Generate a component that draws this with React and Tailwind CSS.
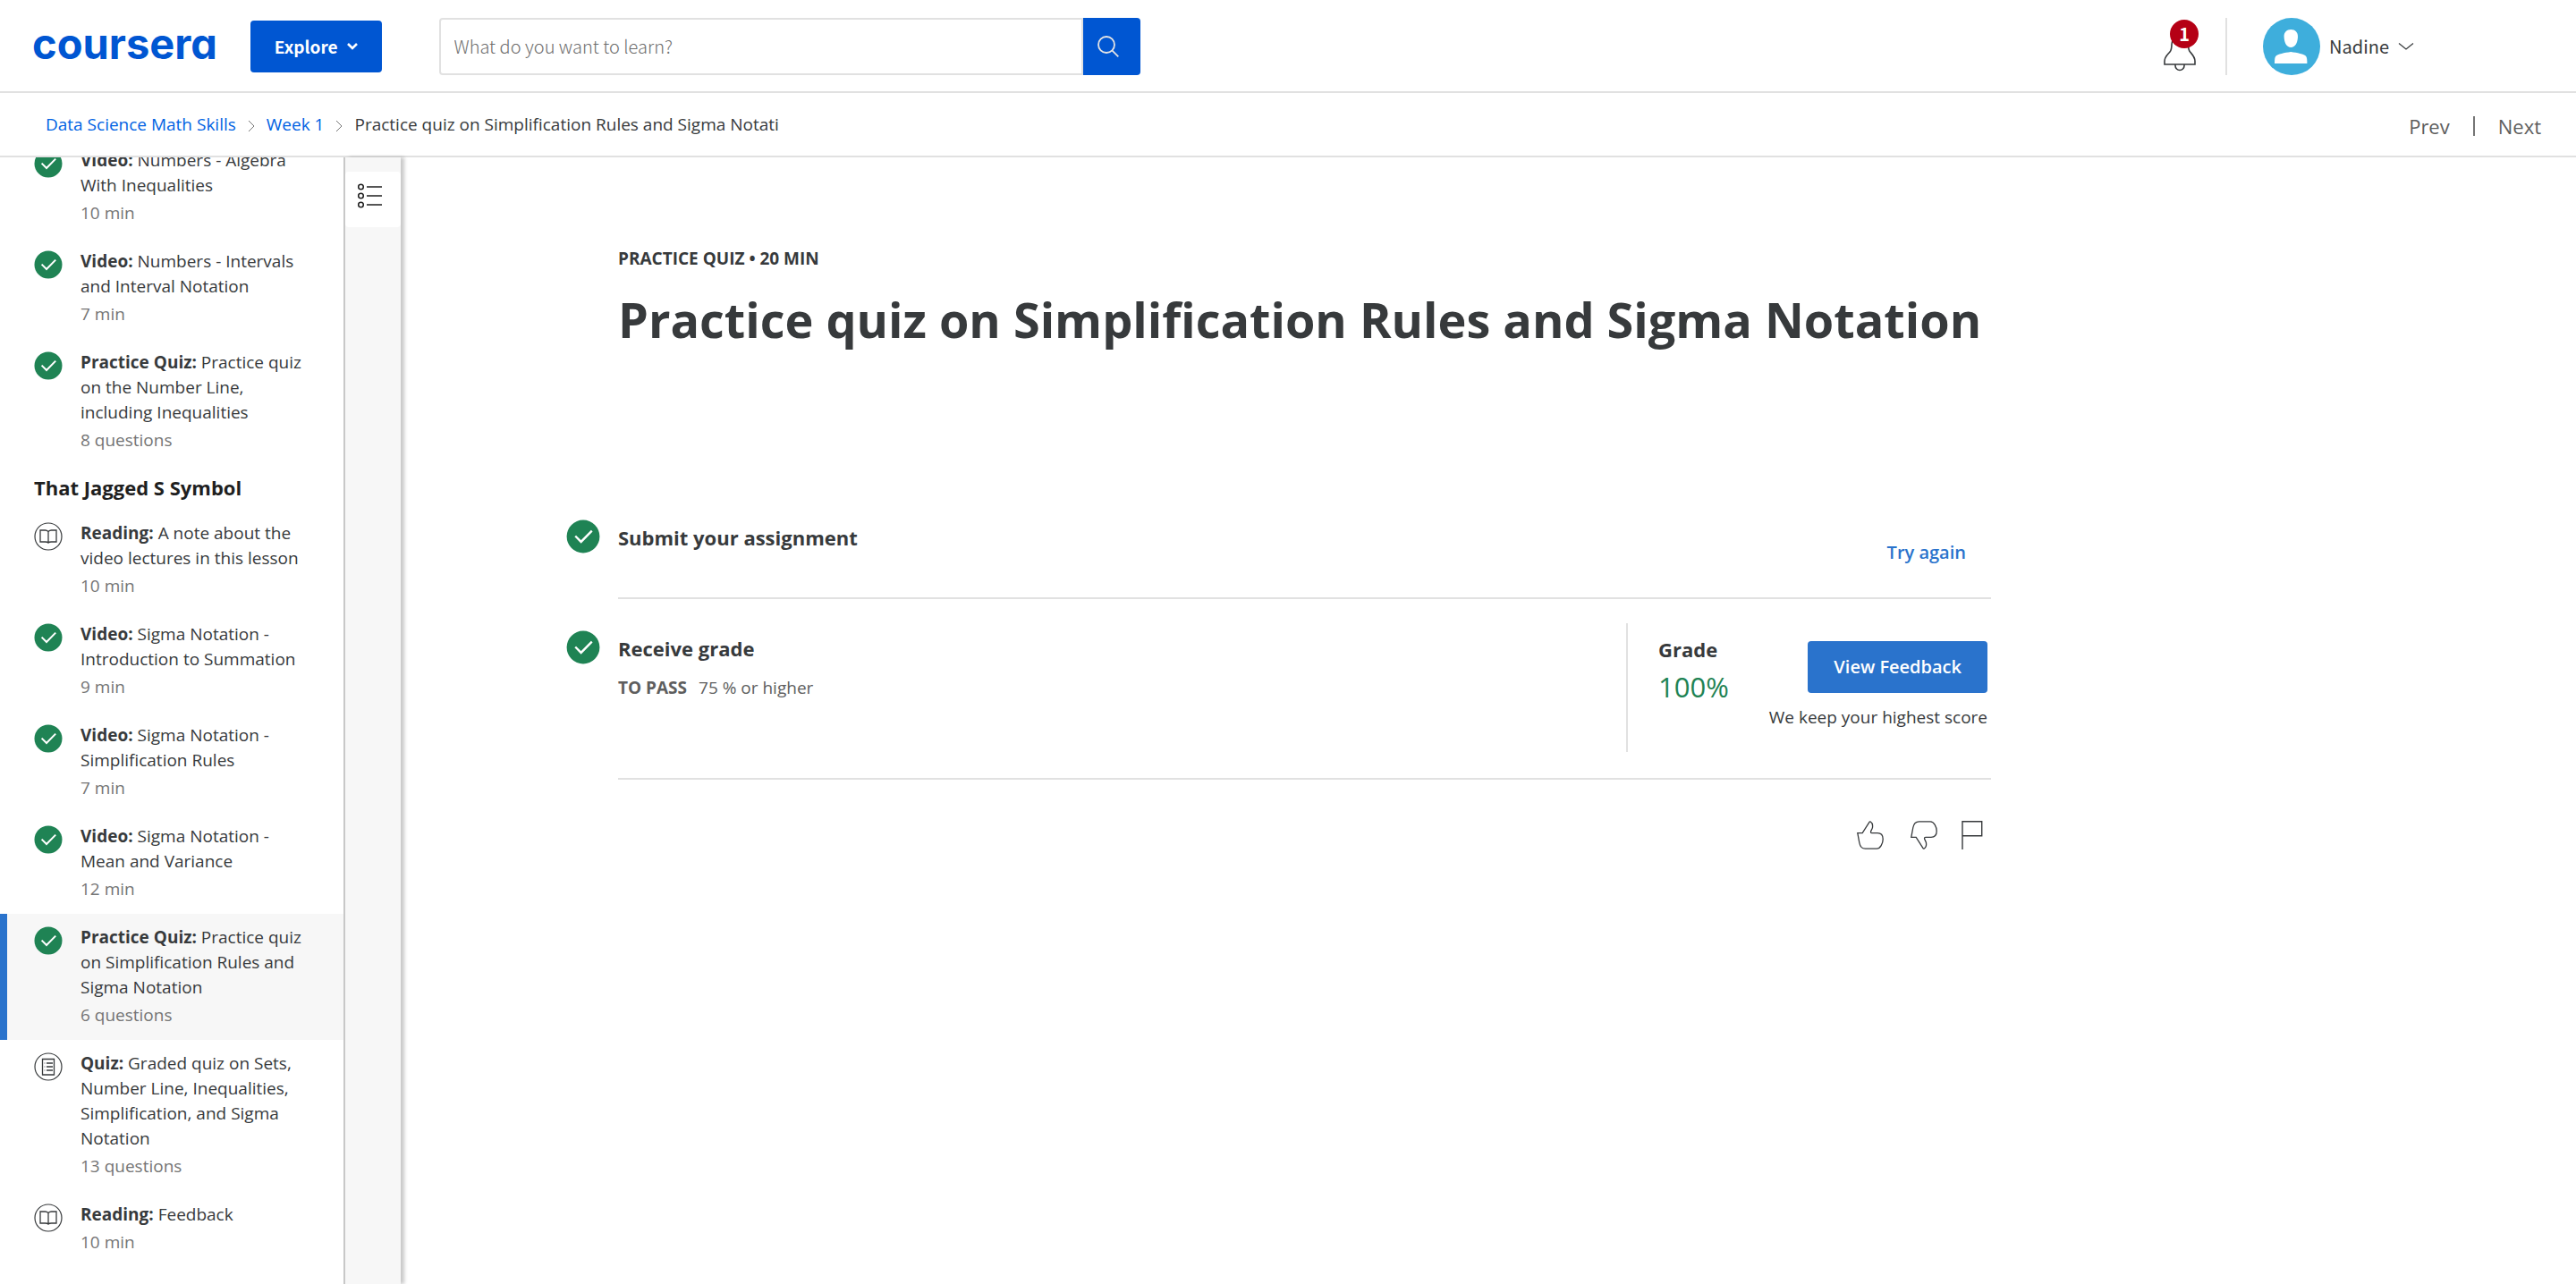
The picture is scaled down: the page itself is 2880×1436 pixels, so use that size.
import React from "react";

const items = [
  { kind: "done", type: "Video", title: "Numbers - Algebra With Inequalities", meta: "10 min" },
  { kind: "done", type: "Video", title: "Numbers - Intervals and Interval Notation", meta: "7 min" },
  { kind: "done", type: "Practice Quiz", title: "Practice quiz on the Number Line, including Inequalities", meta: "8 questions" },
];

const jaggedItems = [
  { kind: "reading", type: "Reading", title: "A note about the video lectures in this lesson", meta: "10 min" },
  { kind: "done", type: "Video", title: "Sigma Notation - Introduction to Summation", meta: "9 min" },
  { kind: "done", type: "Video", title: "Sigma Notation - Simplification Rules", meta: "7 min" },
  { kind: "done", type: "Video", title: "Sigma Notation - Mean and Variance", meta: "12 min" },
  { kind: "done", type: "Practice Quiz", title: "Practice quiz on Simplification Rules and Sigma Notation", meta: "6 questions", active: true },
  { kind: "quiz", type: "Quiz", title: "Graded quiz on Sets, Number Line, Inequalities, Simplification, and Sigma Notation", meta: "13 questions" },
  { kind: "reading", type: "Reading", title: "Feedback", meta: "10 min" },
];

function DoneIcon({ className }) {
  return (
    <svg viewBox="0 0 32 32" className={className} fill="none" aria-hidden="true">
      <circle cx="16" cy="16" r="15.5" fill="#1f8354" />
      <path d="M8.6 15.6 14 21 24.2 10.6" stroke="#fff" strokeWidth="2" />
    </svg>
  );
}

function ReadingIcon({ className }) {
  return (
    <svg viewBox="0 0 32 32" className={className} fill="none" stroke="#373a3c" aria-hidden="true">
      <circle cx="16" cy="16" r="15" strokeWidth="1.2" />
      <path d="M16 10.500c-1-1-2.200-1.500-3.500-1.500H7v13h5.500c1.300 0 2.800.2 3.500 1 .7-.8 2.200-1 3.500-1H25V9h-5.500c-1.300 0-2.500.5-3.500 1.500Zm0 0v13" strokeWidth="1.300" />
    </svg>
  );
}

function QuizIcon({ className }) {
  return (
    <svg viewBox="0 0 32 32" className={className} fill="none" stroke="#373a3c" aria-hidden="true">
      <circle cx="16" cy="16" r="15" strokeWidth="1.2" />
      <path d="M9.500 7.500h13v17.500h-13z" strokeWidth="1.300" />
      <path d="M14 12h7M14 16h7M14 20h7" strokeWidth="1.600" />
      <path d="M11.200 12h1.600M11.200 16h1.600M11.200 20h1.600" strokeWidth="1.600" stroke="#b5b5b9" />
    </svg>
  );
}

const icons = { done: DoneIcon, reading: ReadingIcon, quiz: QuizIcon };

function Lesson({ item }) {
  const Icon = icons[item.kind];
  return (
    <li>
      <a
        href="#lesson"
        aria-current={item.active ? "page" : undefined}
        className={`flex items-start gap-5 border-l-8 pt-3 pb-[14px] pl-[30px] pr-8 ${
          item.active ? "border-[#2a73cc] bg-[#f7f7f7]" : "border-transparent"
        }`}
      >
        <Icon className="mt-[2px] h-8 w-8 shrink-0" />
        <span className="text-[19px] leading-7">
          <span className="block">
            <strong className="font-bold">{item.type}:</strong> {item.title}
          </span>
          <span className="mt-[3px] block text-[#757575]">{item.meta}</span>
        </span>
      </a>
    </li>
  );
}

function Crumb() {
  return (
    <svg viewBox="0 0 8 14" className="mt-1 h-[14px] w-2" fill="none" stroke="#757575" aria-hidden="true">
      <path d="M1 1l6 6-6 6" />
    </svg>
  );
}

function Header() {
  return (
    <header className="flex h-[104px] shrink-0 items-center border-b-2 border-[#e1e1e1] pt-[2px] pr-[181px] pl-9">
      <a
        href="#home"
        className="pb-[6px] font-['Inter',sans-serif] text-[47px] leading-[56px] font-bold text-[#0056d2] [font-feature-settings:'cv11']"
      >
        coursera
      </a>
      <button className="ml-[37px] flex h-[58px] items-center gap-[10px] rounded bg-[#0056d2] px-[27px] font-['Noto_Sans_CJK_SC',sans-serif] text-[19px] font-bold text-white">
        Explore
        <svg viewBox="0 0 12 8" className="h-2 w-3" fill="none" stroke="currentColor" strokeWidth="2.600" aria-hidden="true">
          <path d="M1 1l5 5 5-5" />
        </svg>
      </button>
      <form className="ml-16 flex h-16 w-[784px]">
        <input
          type="search"
          aria-label="Search"
          placeholder="What do you want to learn?"
          className="min-w-0 flex-1 rounded-l border-2 border-[#e1e1e1] pl-[15px] font-['Noto_Sans_CJK_SC',sans-serif] text-[20px] font-light placeholder:text-[#6d6d6d]"
        />
        <button type="button" aria-label="Submit search" className="flex w-16 items-center justify-center rounded-r bg-[#0056d2]">
          <svg viewBox="0 0 24 24" className="mr-2 h-6 w-6" fill="none" stroke="#e4e4e4" strokeWidth="1.800" aria-hidden="true">
            <circle cx="10" cy="10" r="9" />
            <path d="M16.300 16.300l7 7" />
          </svg>
        </button>
      </form>
      <div className="ml-auto flex h-16 items-center">
        <button aria-label="Notifications" className="relative h-16 w-9">
          <svg viewBox="0 0 36 44" className="mt-[12px] h-11 w-9" fill="none" stroke="#373a3c" strokeWidth="1.600" aria-hidden="true">
            <path d="M1 36v-3.500c0-5 3.500-7.500 6-10.500 1.700-2 2-4 2-8.500C9 8.500 12 5 18 5s9.500 3.500 9.500 8.500c0 4.500.3 6.500 2 8.500 2.500 3 5.500 5.500 5.500 10.500V36Z" />
            <path d="M13 36v1.500a5 5 0 0 0 10 0V36" />
          </svg>
          <span className="absolute top-[2px] left-[7px] flex h-8 w-8 items-center justify-center rounded-full bg-[#b50015] font-['Noto_Sans_CJK_SC',sans-serif] text-[20px] leading-8 font-bold text-white">
            1
          </span>
        </button>
        <span className="ml-[33px] h-16 w-[2px] bg-[#e1e1e1]" />
        <button className="ml-10 flex items-center gap-[10px] font-['Noto_Sans_CJK_SC',sans-serif] text-[20px]">
          <svg viewBox="0 0 64 64" className="h-16 w-16" aria-hidden="true">
            <circle cx="32" cy="32" r="32" fill="#3eaedc" />
            <path d="M31.300 13c4.700 0 8 3 7.700 8.500-.3 6.500-3 11.500-7.700 11.500s-7.400-5-7.700-11.500C23.300 16 26.600 13 31.300 13Z" fill="#fff" />
            <path d="M13 51c0-4 .2-6.500 1.200-8 2-2.500 10-4 17-5 7 1 15 2.500 17 5 1 1.500 1.200 4 1.200 8Z" fill="#fff" />
          </svg>
          Nadine
          <svg viewBox="0 0 18 8" className="h-2 w-[18px]" fill="none" stroke="#373a3c" strokeWidth="1.200" aria-hidden="true">
            <path d="M1 .5l8 6.500 8-6.500" />
          </svg>
        </button>
      </div>
    </header>
  );
}

function Sidebar() {
  return (
    <nav aria-label="Lessons" className="w-[386px] shrink-0 overflow-hidden border-r-2 border-[#c8c8c8]">
      <ul className="-mt-[23px]">
        {items.map((item) => (
          <Lesson key={item.title} item={item} />
        ))}
      </ul>
      <h2 className="py-[10px] pl-[38px] text-[22px] leading-[30px] font-bold text-[#1f1f1f]">That Jagged S Symbol</h2>
      <ul>
        {jaggedItems.map((item) => (
          <Lesson key={item.title} item={item} />
        ))}
      </ul>
    </nav>
  );
}

function Main() {
  return (
    <main className="min-w-0 flex-1 pt-[99px] pl-[185px]">
      <div className="w-full max-w-[1593px]">
        <div className="pl-[58px]">
          <p className="text-[19px] leading-7 font-bold">PRACTICE QUIZ • 20 MIN</p>
          <h1 className="mt-[18px] text-[54px] leading-[72px] font-bold whitespace-nowrap">
            Practice quiz on Simplification Rules and Sigma Notation
          </h1>
        </div>

        <section className="mt-[167px] flex gap-5">
          <DoneIcon className="mt-[21px] h-[38px] w-[38px] shrink-0" />
          <div className="flex h-[110px] flex-1 items-start justify-between border-b-2 border-[#e1e1e1] pt-[26px] pr-7">
            <h2 className="text-[22px] leading-[30px] font-bold">Submit your assignment</h2>
            <button className="mt-[18px] text-[20px] leading-7 font-semibold text-[#2a73cc]">Try again</button>
          </div>
        </section>

        <section className="flex gap-5">
          <DoneIcon className="mt-[35px] h-[38px] w-[38px] shrink-0" />
          <div className="flex flex-1 justify-between border-b-2 border-[#e1e1e1]">
            <div className="pt-10">
              <h2 className="text-[22px] leading-[30px] font-bold">Receive grade</h2>
              <p className="mt-[15px] flex gap-[13px] text-[19px] leading-7 text-[#5e5e5e]">
                <strong className="font-bold">TO PASS</strong>
                <span>75 % or higher</span>
              </p>
            </div>
            <div className="mt-[27px] mb-[29px] flex h-36 w-[408px] justify-between border-l-2 border-[#e1e1e1] pr-1 pl-[34px]">
              <div className="pt-[14px]">
                <h3 className="text-[22px] leading-[30px] font-bold">Grade</h3>
                <p className="mt-[7px] text-[31px] leading-10 text-[#1f8354]">100%</p>
              </div>
              <div className="flex flex-col items-end pt-5">
                <button className="h-[58px] rounded-sm bg-[#2a73cc] px-[29px] text-[20px] font-semibold text-white">View Feedback</button>
                <p className="mt-[13px] text-[19px] leading-7">We keep your highest score</p>
              </div>
            </div>
          </div>
        </section>

        <div className="mt-[46px] flex justify-end pr-[9px]">
          <button aria-label="Like">
            <svg viewBox="0 0 30 32" className="h-8 w-[30px]" fill="none" stroke="#373a3c" strokeWidth="1.300" aria-hidden="true">
              <path d="M.8 13.700h5.400L14 1.300c.3-.5.8-.6 1.300-.3 2 1.200 2.600 3.300 2.200 6.300-.4 2.200-2 3.600-2 5.200 0 .9.500 1.200 1.300 1.200H23c4 0 6.200 2.400 6.200 6.800 0 4.800-3 10.700-7 10.700H9.500c-4 0-6-3-6.700-6.700Z" />
            </svg>
          </button>
          <button aria-label="Dislike" className="ml-[30px]">
            <svg viewBox="0 0 30 32" className="h-8 w-[30px]" fill="none" stroke="#373a3c" strokeWidth="1.300" aria-hidden="true">
              <path d="M.8 18.300h5.400L14 30.700c.3.500.8.600 1.300.300 2-1.200 2.600-3.300 2.200-6.300-.4-2.200-2-3.600-2-5.200 0-.9.500-1.200 1.300-1.200H23c4 0 6.200-2.400 6.200-6.800C29.200 6.700 26.200.8 22.200.8H9.500c-4 0-6 3-6.700 6.700Z" />
            </svg>
          </button>
          <button aria-label="Flag" className="ml-[27px]">
            <svg viewBox="0 0 24 32" className="h-8 w-6" fill="none" stroke="#373a3c" strokeWidth="1.400" aria-hidden="true">
              <path d="M1 32V.8h21.700v16H1" />
            </svg>
          </button>
        </div>
      </div>
    </main>
  );
}

export default function App() {
  return (
    <div className="flex h-screen flex-col overflow-hidden bg-white font-['Open_Sans',sans-serif] text-[#373a3c]">
      <Header />
      <div className="flex h-[72px] shrink-0 items-center justify-between border-b-2 border-[#e1e1e1] pr-[39px] pl-[51px]">
        <nav aria-label="Breadcrumb" className="flex items-center gap-[13px] text-[19px] leading-7">
          <a href="#course" className="text-[#0062e3]">Data Science Math Skills</a>
          <Crumb />
          <a href="#week" className="text-[#0062e3]">Week 1</a>
          <Crumb />
          <span>Practice quiz on Simplification Rules and Sigma Notati</span>
        </nav>
        <div className="flex items-center gap-[26px] pt-1 text-[22px] leading-[30px] text-[#5e5e5e]">
          <a href="#prev">Prev</a>
          <span className="h-[22px] w-[2px] bg-[#757575]" />
          <a href="#next">Next</a>
        </div>
      </div>
      <div className="flex min-h-0 flex-1">
        <Sidebar />
        <div className="w-[62px] shrink-0 bg-[#f7f7f7] pt-4 shadow-[4px_0_4px_rgba(0,0,0,0.22)]">
          <button aria-label="Toggle lesson list" className="flex h-[62px] w-full items-center rounded bg-white pb-2 pl-[14px]">
            <svg viewBox="0 0 28 28" className="h-7 w-7" fill="none" stroke="#1f1f1f" strokeWidth="1.500" aria-hidden="true">
              <circle cx="3.500" cy="4" r="2.800" />
              <circle cx="3.500" cy="14" r="2.800" />
              <circle cx="3.500" cy="24" r="2.800" />
              <path d="M10 4h17M10 14h17M10 24h17" />
            </svg>
          </button>
        </div>
        <Main />
      </div>
    </div>
  );
}
